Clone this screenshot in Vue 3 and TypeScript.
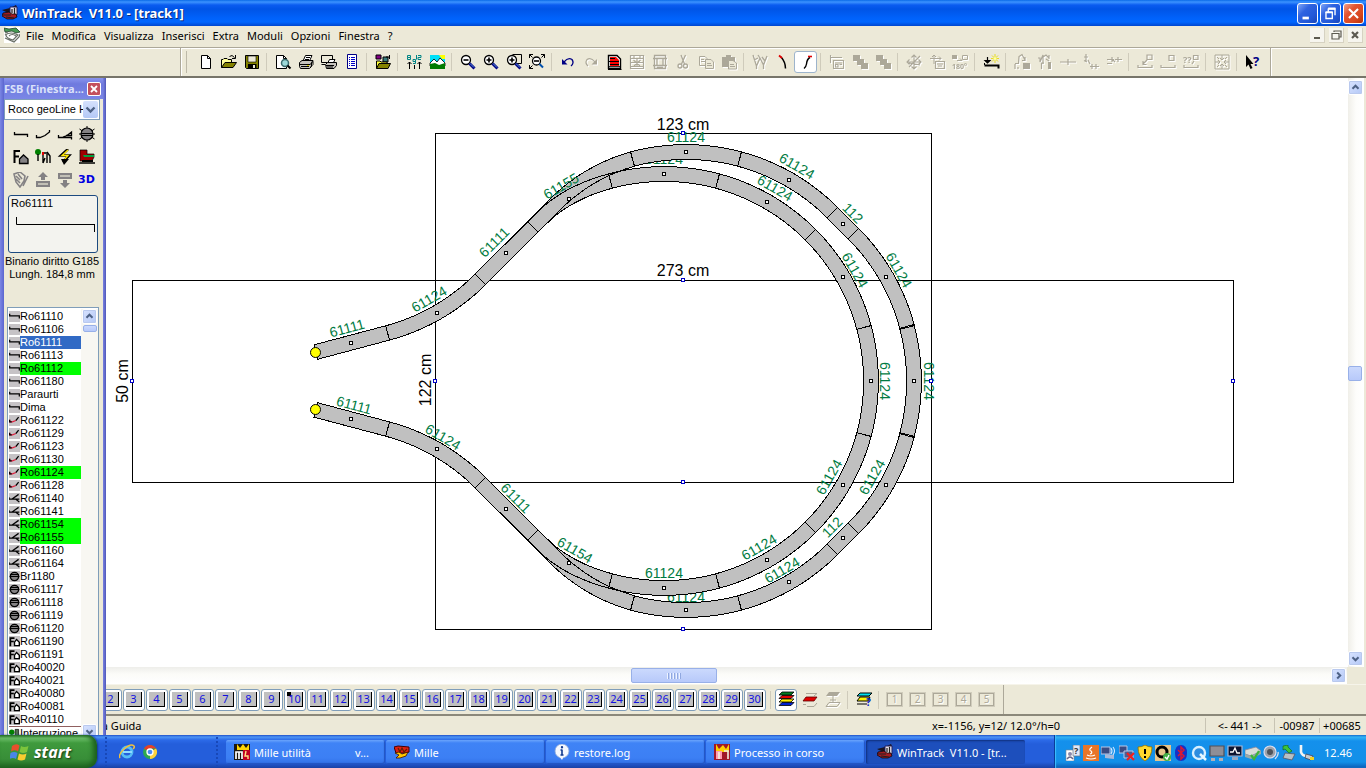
<script setup lang="ts">
import { h, ref } from 'vue'

type Shape = [d: string, fill?: string, stroke?: string, width?: number]
type Mark = [text: string, x: number, y: number, size: number, color: string]
interface Glyph { s: Shape[]; t?: Mark[] }

const K = '#000'
const G = '#aca899'
const N = 'none'
const circle = (x: number, y: number, r: number) =>
  `M${x - r} ${y}a${r} ${r} 0 1 0 ${2 * r} 0a${r} ${r} 0 1 0 ${-2 * r} 0Z`
const lens: Shape[] = [
  [circle(6, 6, 4.5), '#fff', K, 1.3],
  ['M9.5 9.5L14.5 14.5', N, '#000084', 3],
  ['M10 9.5L14 13.5', N, '#5a9ade', 1],
]

const glyphs: Record<string, Glyph> = {
  new: { s: [['M3.5 1.5H9.5L12.5 4.5V14.5H3.5Z', '#fff', K], ['M9.5 1.5V4.5H12.5', N, K]] },
  open: { s: [['M.5 13.5V5.5H2L3 4.5H6L7 5.5H10.5V8.5', '#ffff9c', K], ['M.5 13.5L4 8.5H15.5L12 13.5Z', '#848200', K], ['M8.5 2.5Q11 0 13.5 3.5M14.5 1V4.5H11', N, K]] },
  save: { s: [['M1.5 1.5H14.5V14.5H2.5L1.5 13.5Z', '#848200', K], ['M4 2H12V8H4Z', '#ece9d8', K, 0.6], ['M4 10H12.5V14.5H4Z', K], ['M9 11H11V14H9Z', '#ece9d8']] },
  preview: { s: [['M1.5 1.5H8.5L11.5 4.5V14.5H1.5Z', '#fff', K], ['M8.5 1.5V4.5H11.5', N, K], [circle(10, 9, 3.5), '#9cd8d8', '#39696b', 1.5], ['M12.5 11.5L15.5 14.5', N, K, 2]] },
  print: { s: [['M5 7L7.5 1.5H14L11.5 7Z', '#fff', K], ['M8 3.5H12M7 5.5H11', N, K], ['M1.5 8.5L4 6.5H15L13.5 8.5V12.5L11.5 14.5H2.5L1.5 12.5Z', '#c6c3bd', K], ['M1.5 10.5H12.5M12.5 10L15 7.5V10.5L12.5 13M3 12.5H11', N, K], ['M9 11.5H11', N, '#ded000']] },
  setup: { s: [['M.5 1.5H11.5V8.5H.5Z', '#ece9d8', K], ['M.5 10.5H4', N, K], ['M7 8.5L8.5 5.5H14L12.5 8.5', '#fff', K], ['M4.5 10.5L6.5 8.5H15.5V11.5L13 14.5H5.5Z', '#c6c3bd', K], ['M5 11.5H13M6 13H12', N, K]] },
  list: { s: [['M3.5 .5H12.5V14.5H3.5Z', '#fff', '#000084'], ['M5 3.5H6M5 5.5H6M5 7.5H6M5 9.5H6M5 11.5H6M7 3.5H11M7 5.5H11M7 7.5H11M7 9.5H11M7 11.5H11', N, '#0000c6']] },
  library: { s: [['M1 1H6V5H1Z', '#840084', K], ['M8 3H13V8H8Z', '#397b7b', K], ['M11 3H15M14.5 1V5', N, K], ['M1.5 14.5V7H5L6 8H12V10', '#ffff39', K], ['M1.5 14.5L4 9.5H15.5L13 14.5Z', '#848200', K]] },
  heights: { s: [['M3.5 15V8M1.5 10L3.5 8L5.5 10M13.5 15V8M11.5 10L13.5 8L15.5 10M8.5 11V15', N, K], ['M1.5 1.5H4.5V3.5H1.5ZM1.5 3.5V5.5H4.5V3.5M7 5.5H9.5V7.5H7ZM9.5 7V9.5H7M10.5 1V5.5M12 1.5H15V3.5H12V5.5H15', N, '#008484']] },
  picture: { s: [['M1 1H16V15H1Z', '#00e0f8'], ['M10 1H16V5H13Z', '#ffff00'], ['M1 9L5 5L8 8L11 4L16 9V12H1Z', '#fff', K, 0.8], ['M1 10L6 9L10 11L16 9V15H1Z', '#007b00']] },
  zoomOut: { s: [...lens, ['M3.5 6H8.5', N, K, 1.6]] },
  zoomIn: { s: [...lens, ['M3.5 6H8.5M6 3.5V8.5', N, K, 1.6]] },
  zoomArea: { s: [['M6.5 .5H15.5V9.5H9', '#ece9d8', K], ...lens, ['M3.5 6H8.5M6 3.5V8.5', N, K, 1.6]] },
  zoomFit: { s: [[circle(7.5, 7, 4), '#fff', K, 1.3], ['M10.5 10L14 13.5', N, '#0050ad', 2], ['M5 7H10', N, K, 1.6], ['M.5 4V.5H4M.5 .5L3.5 3.5M12 .5H15.5V4M15.5 .5L12.5 3.5M.5 11V14.5H4M.5 14.5L3.5 11.5', N, K]] },
  undo: { s: [['M4 8Q8 3 12 5.5Q14.5 9 11 12', N, '#000084', 1.3], ['M2 5V10.5H7.5Z', '#000084']] },
  redo: { s: [['M12 8Q8 3 4 5.5Q1.5 9 5 12', N, G, 1.2], ['M14 5V10.5H8.5Z', G]] },
  parts: { s: [['M2.5 1.5H11L14.5 5V14.5H2.5Z', '#fff', K, 1.4], ['M4 3H10L13 6V12H4Z', '#f00'], ['M4 4.5H9M3 7.5H13M4 10.5H13', N, K, 1.2], ['M3 12.7H14', N, K, 1], ['M2 15.5H15.500', N, K]] },
  split: { s: [['M1.5 1.5H14.5V14.5H1.5ZM1.5 4.5H14.5M1.5 8.5H14.5M1.5 12.5H14.5M5 1V5M11 1V5M8 5V12M4.5 6L11 12M11.5 6L5 12', N, G, 1.2]] },
  film: { s: [['M2.5 1.5H13.5V14.5H2.5ZM1 4.5H15M1 11.5H15M5 4V12M11 4V12M5 13.5H11', N, G, 1.3]] },
  cut: { s: [['M6 1L9.5 10M10.5 1L6.5 10', N, G, 1.3], [circle(5, 12, 2), N, G, 1.3], [circle(10.5, 12, 2), N, G, 1.3]] },
  copy: { s: [['M1.5 2.5H7L9.5 5V11.5H1.5Z', N, G], ['M7.5 5.5H13L15.5 8V14.5H7.5Z', '#ece9d8', G], ['M3 5.5H6M3 7.5H7M9 9.5H13M9 11.5H14', N, G]] },
  paste: { s: [['M1 3H14V13H1Z', G], ['M5 1H10V4H5Z', G], ['M7.5 6.5H12L15.5 9V15H7.5Z', '#ece9d8', G], ['M9 10.5H13M9 12.5H14', N, G]] },
  fan: { s: [['M4.5 15V12L1 1M4.5 12L8 4M11.5 15V11L8 4L6 1M11.5 11L15 2M2 6L6 4M13 7L10 3', N, G, 1.3]] },
  curveL: { s: [['M6 3Q10.5 8 10.5 14.5', N, K, 1.5], ['M4 1.500L7 4', N, '#e00000', 1.8]] },
  curveR: { s: [['M12 3.5Q9 5 8.500 10Q8 13 6 14.5', N, K, 1.4], ['M10 2.5H14', N, '#e00000', 1.6]] },
  props: { s: [['M1 3.5H13M1.5 1V9M4.5 6.5H14.5V14.5H4.5ZM6 9H13M6.5 10.5H9V13H6.5ZM10.5 10.5H13', N, G, 1.1]] },
  stack: { s: [['M1 1H8V7H1ZM5 5H12V11H5ZM9 9H16V15H9Z', G]] },
  move: { s: [['M8 1V15M1 8H15M3 13L14 2M5.5 3.5L8 1L10.5 3.5M5.5 12.5L8 15L10.5 12.5M3.5 5.5L1 8L3.5 10.5M12.5 5.5L15 8L12.5 10.5M3 9L14 11', N, G, 1.1]] },
  moveBox: { s: [['M5 1V10M1 4.5H12M3 3L5 1L7 3M10 2.5L12 4.5L10 6.5', N, G], ['M6.5 7.5H15.5V14.5H6.5ZM8 10H14M9 12H13', N, G, 1.2]] },
  rot: { s: [['M0 1H5V5H0Z', G], ['M10.5 1.5H15.5V5.5H10.5ZM5 6.5H10M8 4.5L10 6.5', N, G]], t: [['180°', 0, 15, 7, G]] },
  snap: { s: [['M1.5 11.5H15.5V14.5', N, K, 2], ['M1.500 11V9', N, K], ['M4.5 3V9M2 6.500H7L4.5 9Z', K, K, 1.2], ['M12 0V9M8 4.5H16M9 1.5L15 7.5M15 1.5L9 7.5', N, '#e8dc20', 1], [circle(12, 4.5, 1.5), '#ffffa0']] },
  h1: { s: [['M1 15V10M1 9.5H4.5L5 2.5L8 .5L11 6M11 3V6.5H8M4 13V15', N, G, 1.2], ['M9 9H16V15H9Z', G]] },
  h2: { s: [['M1 4H3V8L6 1V10M6 3L9 1L12 4M12 1V5M4.5 15V9H7M9 5L12 7', N, G, 1.2], ['M11 8H14V15H11Z', G]] },
  h3: { s: [['M0 8H16M8 5V11', N, G, 1.2]] },
  h4: { s: [['M3 0V7M1 3H5M5 6L7 10M1 6.5L4 8M7 12.5H16M9 10V15M13 10V15', N, G, 1.2]] },
  h5: { s: [['M1 5.5H8M6 3V8M1 9.5H6M9 5.5H16M6 5L9 8M12 3V8', N, G, 1.2]] },
  g1: { s: [['M1 11V13.5H15V11', N, G, 1.2], ['M10 1H15V5.5H10ZM10 6L6 10M6 7V10.5H9.5', N, G, 1.2]] },
  g2: { s: [['M1 11V13.5H15V11M9 1.5H14V6.5H9Z', N, G, 1.2]] },
  g3: { s: [['M1 11V13.5H15V11M10.5 1.5H15V5.5H10.5ZM9 10L11 7', N, G, 1.2]], t: [['??', 0, 9, 9, G]] },
  center: { s: [['M1 1H15V15H1Z', N, G, 1], ['M8 1V6M6 4L8 6L10 4M8 15V10M6 12L8 10L10 12M1 8H6M4 6L6 8L4 10M15 8H10M12 6L10 8L12 10M3 3L5 5M13 3L11 5M3 13L5 11M13 13L11 11', N, G, 1]] },
  help: { s: [['M1 1V13L3.500 10.500L5.500 15L7.500 14L5.500 10H8.500Z', K]], t: [['?', 8, 12, 13, '#000084']] },
  layersAll: { s: [['M4 0H16L13 3H1Z', '#007b21', K, 0.8], ['M4 3.5H16L13 6.5H1Z', '#e00000', K, 0.8], ['M4 7H16L13 10H1Z', '#ffef00', K, 0.8], ['M4 10.5H16L13 13.5H1Z', '#0020d0', K, 0.8]] },
  layerOne: { s: [['M4 1.5H15L12 4M1 12.5H4M5 14.5H12L15 11', N, G], ['M4 5H15L12 9H1Z', '#e00000', '#600000', 0.8]] },
  layerMove: { s: [['M4 0H15L12 4H1Z', G], ['M8 4V11M5 8H11M4 10.5H15L12 14.5H1Z', N, G]] },
  layerHelp: { s: [['M4 1H16L13 4H1Z', '#00e0f0', K], ['M4 5H14L12 9H1Z', '#fff700', K], ['M1 12H11', N, K]], t: [['?', 10, 14, 10, '#0020c0']] },
  pStraight: { s: [['M1.5 6V8.5H14.5V11', N, K, 1.3]] },
  pCurve: { s: [['M1.500 9V11.5H5L10 9.500L14.500 6V4', N, K, 1.3]] },
  pSwitch: { s: [['M1.500 9V11.5H14.500V13.500M6 11L10 9.500L14.500 6V9.500H9', N, K, 1.3]] },
  pTable: { s: [['M.5 3L15.5 13M.5 13L15.5 3M8 0V16M0 8H16', N, K, 1], [circle(8, 8, 6), '#848284', K, 1.2], ['M2 7.5H14M2 9.5H14', N, K, 1]] },
  pHouse: { s: [['M1.5 14V2H7M1.5 7.5H6', N, K, 2], ['M6.5 14.5V10L10.5 6L15 10V14.5Z', '#848284', K, 1.3]] },
  pScene: { s: [[circle(3, 3, 3), '#008000'], ['M3 5V12M8 14V4H12M10 9L8 14M12 5V14M12 3L15 7V14', N, K, 1.4], ['M7 3H9V6H7Z', '#e00000']] },
  pSignal: { s: [['M11 0L4 6.5H12L6 13', N, K, 2.6], ['M11 1L5 6.5H11L7 11', N, '#ffe700', 1.3], ['M4 10H12L7 16Z', K]] },
  pTrain: { s: [['M1 1H8V5H15V8L13 12H1Z', '#a00000', K, 0.7], ['M4 6H15V8H5Z', '#00a040'], ['M0 14H16', N, K, 1.5], ['M3 11H14V13H3Z', K]] },
  pHand: { s: [['M1 2L7 0L12 4L11 9L7 15L3 10ZM3 4L7 8M5 2L9 7M3 7L7 11M10 14L15 4', N, '#848284', 1.6]] },
  pUp: { s: [['M8 0L13 5H10V8H6V5H3Z', '#848284'], ['M1 9H15V15H1Z', '#848284'], ['M3 12H13', N, '#ece9d8', 1.2]] },
  pDown: { s: [['M8 16L13 11H10V8H6V11H3Z', '#848284'], ['M1 1H15V7H1Z', '#848284'], ['M3 4H13', N, '#ece9d8', 1.2]] },
  lStraight: { s: [['M0 0H16V16H0Z', '#c6c3c6'], ['M1 4V7H15V11', N, K, 1.8]] },
  lCurve: { s: [['M0 0H16V16H0Z', '#c6c3c6'], ['M1 7V10H5L10 8', N, '#e02040', 1.8], ['M10 8L14 3M1 7V10H4', N, K, 1.8]] },
  lSwitch: { s: [['M0 0H16V16H0Z', '#c6c3c6'], ['M0 6V9H15M4 9L14 2M10 9L15 13', N, K, 1.8]] },
  lTable: { s: [['M0 0H16V16H0Z', '#c6c3c6'], [circle(8, 8, 6), '#848284', K, 2], ['M1 8H15M2 5H14', N, K, 1.6]] },
  lHouse: { s: [['M0 0H16V16H0Z', '#c6c3c6'], ['M2 15V3H8M2 8H7', N, K, 2.5], ['M8 14V9L11 5L15 9V14Z', '#fff', K, 2]] },
  lSignal: { s: [[circle(4, 6, 4), '#008000'], ['M9 2H14V12H9Z', '#507050', K, 1]] },
  app: { s: [['M0 5L8 3L14 0L15 2L6 8Z', '#1b1420'], ['M8 2H15V10H8Z', '#e8e0e8', '#202060', 1], ['M1 8L7 7L10 9L14 9L15 12L11 14L5 14L0 11Z', '#a31c22', K, 0.7], ['M10 4V8M12.5 3V9M1 10H9M4 12L12 13', N, '#202020', 1.2]] },
  doc: { s: [['M0 0H16V16H0Z', '#fff'], ['M0 1L5 2L12 1L16 5L12 6L8 4L1 5Z', '#479a54', '#204028', 0.8], ['M1 8Q7 4 14 8L9 13Q2 11 2 8M5 9Q8 6 12 9M1 6L4 5M1 11L10 15L15 10L16 7', N, '#6a7068', 1.2]] },
  arcade: { s: [['M0 0H16V16H0Z', '#1c1810'], ['M3 0L6 4L9 0L12 4L15 0V6H3Z', '#ffd700'], ['M9 6H16V16H9Z', '#c00020'], ['M2 15V8H8V15M5 8V15', N, '#fff', 1.7], ['M12 7L11 12H14V15', N, '#ffe080', 1.4]] },
  arcade2: { s: [['M0 0H16V16H0Z', '#a01828'], ['M2 0L5 5L9 1L12 5L15 0V8H2Z', '#ffd000'], ['M2 7H8V15H2Z', '#ff9cb0'], ['M5 8V15M10 7H14V15', N, '#f0f0e0', 1.6]] },
  mille: { s: [['M0 3L4 2L15 3V8L12 9H2Z', '#e02010', '#400', 1], ['M1 9L5 8L8 10L14 8L12 12L6 14H2L5 11Z', '#ffc800', '#401000', 0.8], ['M4 4L6 8L8 4L10 8L13 5', N, '#602000', 1.2]] },
  info: { s: [[circle(8, 7, 7), '#f4f8ff', '#8ca8d8', 0.8], ['M5 12L8 16L10 12Z', '#f4f8ff'], ['M8 6V11M6.5 6H8.5M6.5 11H9.5', N, '#103a90', 1.6], [circle(8, 3.3, 1.2), '#103a90']] },
  ie: { s: [[circle(8, 8, 5), N, '#55bdf5', 2.8], ['M4 8H13', N, '#8fdcff', 2], ['M1 14Q-1 11 5 5Q12 -1 15 2Q16 3 14 5', N, '#f0c040', 1.5]] },
  chrome: { s: [[circle(8, 8, 7), '#2da94f'], ['M8 8L1.9 4.4A7 7 0 0 1 14.1 4.5H8Z', '#e43e2b'], ['M8 8L14.1 4.5A7 7 0 0 1 8 15Z', '#ffd23f'], [circle(8, 8, 3), '#4c8df5', '#fff', 1.3]] },
  t1: { s: [['M1 5H9V16H1Z', '#fff', '#789', 0.6], ['M8 0H15V11H8Z', '#dfe8f8', '#678', 0.7], [circle(5, 9, 2), '#88a'], ['M2 14Q5 10 8 14', N, '#668', 1.4]], t: [['?', 9, 9, 9, '#333']] },
  t2: { s: [['M0 0H16V16H0Z', '#e87528'], ['M9 2Q5 5 8 6Q10 8 7 9M4 10Q8 12 12 10M3 13Q8 15 13 13', N, '#fff', 1.2]] },
  t3: { s: [['M0 2H9V9H0Z', '#394b83', '#b8c8e8', 1], ['M4 9L13 10V14L4 13Z', '#a8b8d8'], ['M10 3Q12 6 10 9M12 2Q15 6 12 10', N, '#d8e8ff', 1.1]] },
  t4: { s: [['M0 1H8V8H0Z', '#394b83', '#b8c8e8', 1], ['M5 6H14V13H5Z', '#4b5e95', '#b8c8e8', 1], ['M8 8L15 15M15 8L8 15', N, '#f02020', 2.2]] },
  t5: { s: [['M8 0Q11 2 15 2Q15 12 8 16Q1 12 1 2Q5 2 8 0Z', '#ffd92e', '#907000', 0.8], ['M8 4V9M8 11V13', N, K, 2]] },
  t6: { s: [['M0 0H16V16H0Z', '#e7c58b'], [circle(7, 7, 5), N, K, 3], [circle(12, 12, 4), '#43ad45'], ['M10 12L12 14L14 10', N, '#fff', 1.4]] },
  t7: { s: [['M8 0Q14 0 14 8T8 16T2 8T8 0Z', '#1432c8'], ['M5 5L11 11L8 14V2L11 5L5 11', N, '#e01830', 1.5]] },
  t8: { s: [[circle(8, 8, 6), '#2c8de0', '#d8f0ff', 2.4], ['M9 9L15 15', N, '#e8f8ff', 2.5]] },
  t9: { s: [['M1 1H15V11H1Z', '#8e8e96', '#50505a', 1.2], ['M2 13H6V16H2ZM10 13H14V16H10Z', '#b0b0b8']] },
  t10: { s: [['M1 1H15V11H1Z', '#0c1430', '#a8b8d8', 1.2], ['M3 7H6L8 3L10 8H13', N, '#fff', 1.3], ['M5 12H11V15H5Z', '#98a8c0']] },
  t11: { s: [['M0 5L11 2L16 6L6 11L0 9Z', '#d8dcd8', '#889', 0.8], ['M0 9L6 11L16 6V9L6 14L0 12Z', '#9aa'], ['M6 10L9 14L14 6', N, '#3cb43c', 2.3]] },
  t12: { s: [[circle(7, 7, 6), '#9fa3aa', '#dde', 1.2], [circle(7, 7, 3), '#50545c'], ['M12 14Q16 10 15 7', N, '#d0dcf0', 1.4]] },
  t13: { s: [['M4 8L14 9L11 15L2 13Z', '#b8c0c4', '#556', 0.8], ['M2 1L7 0V2L11 6L8 8L4 4L2 5Z', '#3cc43c', '#106010', 0.6]] },
  t14: { s: [['M2 0V7Q3 11 8 11', N, '#f4f4f4', 2.6], ['M7 9L14 11L12 15L6 13Z', '#c8ccd0', '#445', 0.8], ['M11 12H15V15H11Z', '#f0d020']] },
}

const Ico = (p: { n: string; size?: number }) => {
  const g = glyphs[p.n]
  const size = p.size ?? 16
  return h('svg', { width: size, height: size, viewBox: '0 0 16 16', 'aria-hidden': 'true' }, [
    ...g.s.map(([d, fill, stroke, w]) =>
      h('path', { d, fill: fill ?? N, stroke: stroke ?? N, 'stroke-width': w ?? 1 })),
    ...(g.t ?? []).map(([text, x, y, fs, color]) =>
      h('text', { x, y, fill: color, 'font-size': fs, 'font-weight': 700 }, text)),
  ])
}
Ico.props = ['n', 'size']

const title = 'WinTrack  V11.0 - [track1]'
const menus = ['File', 'Modifica', 'Visualizza', 'Inserisci', 'Extra', 'Moduli', 'Opzioni', 'Finestra', '?']

const toolGroups: string[][] = [
  ['new', 'open', 'save'], ['preview', 'print', 'setup', 'list'], ['library'], ['heights', 'picture'],
  ['zoomOut', 'zoomIn', 'zoomArea', 'zoomFit'],
  ['undo', 'redo', 'parts', 'split', 'film', 'cut', 'copy', 'paste'],
  ['fan', 'curveL', 'curveR'], ['props', 'stack', 'stack'], ['move', 'moveBox', 'rot'], ['snap'],
  ['h1', 'h2', 'h3', 'h4', 'h5'], ['g1', 'g2', 'g3'], ['center'], ['help'],
]
const disabled = new Set(['redo', 'split', 'film', 'cut', 'copy', 'paste', 'fan', 'props', 'stack', 'move', 'moveBox', 'rot',
  'h1', 'h2', 'h3', 'h4', 'h5', 'g1', 'g2', 'g3', 'center'])

const palette = ['pStraight', 'pCurve', 'pSwitch', 'pTable', 'pHouse', 'pScene', 'pSignal', 'pTrain', 'pHand', 'pUp', 'pDown']

const group = (icon: string, names: string[]) => names.map((name) => ({ icon, name }))
const parts = [
  ...group('lStraight', ['Ro61110', 'Ro61106', 'Ro61111', 'Ro61113', 'Ro61112', 'Ro61180', 'Paraurti', 'Dima']),
  ...group('lCurve', ['Ro61122', 'Ro61129', 'Ro61123', 'Ro61130', 'Ro61124', 'Ro61128']),
  ...group('lSwitch', ['Ro61140', 'Ro61141', 'Ro61154', 'Ro61155', 'Ro61160', 'Ro61164']),
  ...group('lTable', ['Br1180', 'Ro61117', 'Ro61118', 'Ro61119', 'Ro61120']),
  ...group('lHouse', ['Ro61190', 'Ro61191', 'Ro40020', 'Ro40021', 'Ro40080', 'Ro40081', 'Ro40110']),
]
const used = new Set(['Ro61112', 'Ro61124', 'Ro61154', 'Ro61155'])
const selected = ref('Ro61111')

const layers = Array.from({ length: 30 }, (_, i) => i + 1)

const tasks = [
  { icon: 'arcade', text: 'Mille utilità', tail: 'v...' },
  { icon: 'mille', text: 'Mille' },
  { icon: 'info', text: 'restore.log' },
  { icon: 'arcade2', text: 'Processo in corso' },
  { icon: 'app', text: 'WinTrack  V11.0 - [tr...', active: true },
]
const tray = Array.from({ length: 14 }, (_, i) => `t${i + 1}`)

/* Track plan geometry */
type P = [number, number]
const HALF = 7.4
const R = 207
const rad = (a: number) => (a * Math.PI) / 180
const on = (cx: number, cy: number, angle: number): P =>
  [cx + R * Math.cos(rad(angle)), cy + R * Math.sin(rad(angle))]

function arc(cx: number, cy: number, from: number, to: number): P[] {
  return Array.from({ length: 25 }, (_, i) => on(cx, cy, from + ((to - from) * i) / 24))
}
function bend(a: P, s: P, c: P, b: P): P[] {
  const pts: P[] = [a]
  for (let i = 0; i <= 20; i++) {
    const t = i / 20
    const u = 1 - t
    pts.push([u * u * s[0] + 2 * u * t * c[0] + t * t * b[0], u * u * s[1] + 2 * u * t * c[1] + t * t * b[1]])
  }
  return pts
}
function band(pts: P[]): string {
  const left: string[] = []
  const right: string[] = []
  pts.forEach((p, i) => {
    const a = pts[Math.max(0, i - 1)]
    const b = pts[Math.min(pts.length - 1, i + 1)]
    const len = Math.hypot(b[0] - a[0], b[1] - a[1])
    const nx = (-(b[1] - a[1]) / len) * HALF
    const ny = ((b[0] - a[0]) / len) * HALF
    left.push(`${(p[0] + nx).toFixed(1)} ${(p[1] + ny).toFixed(1)}`)
    right.unshift(`${(p[0] - nx).toFixed(1)} ${(p[1] - ny).toFixed(1)}`)
  })
  return `M${[...left, ...right].join('L')}Z`
}
const flip = (pts: P[]): P[] => pts.map(([x, y]) => [x, 762 - y])

const fork: P = [533, 226.8]
const upper: P[][] = [
  [[316, 352], on(334, 133, 75)],
  arc(334, 133, 75, 45),
  [on(334, 133, 45), fork],
  bend(fork, [550, 209.8], [584, 173], on(686, 359, -105)),
  bend(fork, [540, 219.8], [566, 193], on(664, 381, -105)),
  arc(686, 359, -105, -75),
  arc(686, 359, -75, -45),
  [on(686, 359, -45), on(707, 380, -45)],
  arc(707, 380, -45, -15),
  arc(664, 381, -105, -75),
  arc(664, 381, -75, -45),
  arc(664, 381, -45, -15),
]
const middle = [arc(707, 381, -15, 15), arc(664, 381, -15, 15)]
const bands = [...upper, ...upper.map(flip), ...middle].map(band)

const upperDots: P[] = [[351, 343], [437, 313], [506, 253], [569, 199], [686, 152], [789, 180], [843, 224], [886, 277], [664, 174], [767, 202], [843, 277]]
const dots: P[] = [...upperDots, ...flip(upperDots), [914, 381], [871, 381]]
const grips: P[] = [[683, 133], [683, 280], [435, 381], [132, 381], [1233, 381], [931, 381], [683, 482], [683, 629]]

type Tag = [text: string, x: number, y: number, angle: number]
const under: Tag[] = [['61124', 664, 159, 0], ['61124', 686, 597, 0]]
const tags: Tag[] = [
  ['61111', 347, 328, -15], ['61124', 429, 299, -30], ['61111', 494, 242, -45], ['61155', 561, 186, -30],
  ['61124', 686, 137, 0], ['61124', 797, 166, 30], ['112', 853, 213, 45], ['61124', 899, 270, 60],
  ['61124', 929, 381, 90], ['61124', 872, 477, -60], ['112', 832, 527, -45], ['61124', 782, 570, -30],
  ['61124', 775, 188, 30], ['61124', 855, 270, 60], ['61124', 885, 381, 90],
  ['61124', 829, 477, -60], ['61124', 759, 547, -30], ['61124', 664, 573, 0], ['61154', 575, 550, 30],
  ['61111', 516, 498, 45], ['61124', 443, 437, 30], ['61111', 354, 405, 15],
]
const dims: Tag[] = [['123 cm', 683, 125, 0], ['273 cm', 683, 271, 0], ['50 cm', 123, 381, -90], ['122 cm', 426, 380, -90]]
const place = (t: Tag) => `translate(${t[1]} ${t[2]}) rotate(${t[3]})`
</script>

<template>
  <div class="desktop">
    <header class="titlebar">
      <Ico n="app" />
      <h1>{{ title }}</h1>
      <div class="caption">
        <button aria-label="Riduci a icona"><svg viewBox="0 0 21 21"><path d="M5 14H12V17H5Z" fill="#fff" /></svg></button>
        <button aria-label="Ripristina"><svg viewBox="0 0 21 21"><path d="M8 5.5H15.5V12.5M8 5V9M5.5 9.5H12.5V16H5.5Z" fill="none" stroke="#fff" stroke-width="1.5" /><path d="M5 8H13V10H5ZM8 4H16V6H8Z" fill="#fff" /></svg></button>
        <button class="close" aria-label="Chiudi"><svg viewBox="0 0 21 21"><path d="M5.5 5.5L15.5 15.5M15.5 5.5L5.5 15.5" stroke="#fff" stroke-width="2.3" /></svg></button>
      </div>
    </header>

    <nav class="menubar">
      <Ico n="doc" />
      <button v-for="m in menus" :key="m" class="menu">{{ m }}</button>
      <div class="mdi">
        <button aria-label="Riduci documento"><svg viewBox="0 0 14 14"><path d="M4 9H10V11H4Z" fill="#5c5a50" /></svg></button>
        <button aria-label="Ripristina documento"><svg viewBox="0 0 14 14"><path d="M5 4V3H12V9H10M3 5.5H10V11H3ZM5 3H12" fill="none" stroke="#5c5a50" stroke-width="1.2" /></svg></button>
        <button aria-label="Chiudi documento"><svg viewBox="0 0 14 14"><path d="M4 4L10 10M10 4L4 10" stroke="#5c5a50" stroke-width="2.2" /></svg></button>
      </div>
    </nav>

    <div class="toolbar-row">
      <div class="toolbar main-tools" role="toolbar" aria-label="Standard">
        <div v-for="(g, gi) in toolGroups" :key="gi" class="group">
          <button v-for="(t, ti) in g" :key="ti" class="tool" :class="{ on: t === 'curveR', off: disabled.has(t) }" :disabled="disabled.has(t)" :aria-label="t">
            <Ico :n="t" />
          </button>
        </div>
      </div>
    </div>

    <main class="work">
      <div class="plan">
        <svg class="canvas" viewBox="0 78 1348 589" preserveAspectRatio="xMinYMin meet" role="img" aria-label="track1">
          <g class="frames">
            <rect x="132.5" y="280.5" width="1101" height="202" />
            <rect x="435.5" y="133.5" width="496" height="496" />
          </g>
          <text v-for="(t, i) in under" :key="`u${i}`" class="tag" :transform="place(t)" dy="5">{{ t[0] }}</text>
          <path v-for="(d, i) in bands" :key="`f${i}`" :d="d" class="bed" />
          <path v-for="(d, i) in bands" :key="`e${i}`" :d="d" class="edge" />
          <rect v-for="(p, i) in dots" :key="`d${i}`" class="dot" :x="p[0] - 1.5" :y="p[1] - 1.5" width="3" height="3" />
          <text v-for="(t, i) in tags" :key="`t${i}`" class="tag" :transform="place(t)" dy="5">{{ t[0] }}</text>
          <text v-for="(t, i) in dims" :key="`m${i}`" class="dim" :transform="place(t)" dy="5">{{ t[0] }}</text>
          <rect v-for="(p, i) in grips" :key="`g${i}`" class="grip" :x="p[0] - 1.5" :y="p[1] - 1.5" width="3" height="3" />
          <circle class="end" cx="315.5" cy="352.5" r="5" />
          <circle class="end" cx="315.5" cy="409.5" r="5" />
        </svg>
        <div class="vscroll">
          <button class="sb" aria-label="Su"><svg viewBox="0 0 15 15"><path d="M4 9L7.5 5.5L11 9" /></svg></button>
          <span class="thumb"></span>
          <button class="sb" aria-label="Giù"><svg viewBox="0 0 15 15"><path d="M4 6L7.5 9.5L11 6" /></svg></button>
        </div>
      </div>
      <div class="hscroll">
        <span class="thumb"><i v-for="n in 5" :key="n"></i></span>
        <button class="sb" aria-label="Destra"><svg viewBox="0 0 15 15"><path d="M6 4L9.5 7.5L6 11" /></svg></button>
      </div>
    </main>

    <div class="layer-row">
      <div class="toolbar layer-tools" role="toolbar" aria-label="Livelli">
        <div class="group">
          <button v-for="n in layers" :key="n" class="tool layer on" :class="{ current: n === 10 }"><span>{{ n }}</span></button>
        </div>
        <div class="group">
          <button class="tool on" aria-label="Tutti i livelli"><Ico n="layersAll" /></button>
          <button class="tool" aria-label="Livello attivo"><Ico n="layerOne" /></button>
          <button class="tool off" disabled aria-label="Sposta livello"><Ico n="layerMove" /></button>
        </div>
        <div class="group"><button class="tool" aria-label="Nomi livelli"><Ico n="layerHelp" /></button></div>
        <div class="group">
          <button v-for="n in 5" :key="n" class="tool off num" disabled><span>{{ n }}</span></button>
        </div>
      </div>
    </div>

    <footer class="status">
      <span class="hint">la Guida</span>
      <span class="coords">x=-1156, y=12/ 12.0°/h=0</span>
      <span class="cell c1">&lt;- 441 -&gt;</span>
      <span class="cell c2">-00987</span>
      <span class="cell c3">+00685</span>
    </footer>

    <div class="taskbar">
      <button class="start">
        <svg viewBox="0 0 20 20" width="20" height="20" aria-hidden="true">
          <path d="M2 4Q6 1 9.5 3.5L8 9.5Q5 7 1 9.5Z" fill="#e8502c" />
          <path d="M11 4Q14 6 18.5 4L17 10Q13 12 9.5 10Z" fill="#7cc43c" />
          <path d="M.5 11Q4 9 7.5 11L6 17Q3 15 -.5 17Z" fill="#4a86e8" />
          <path d="M9 11.5Q13 13.5 16.5 11.5L15 17.5Q11 19.5 7.5 17.5Z" fill="#f8cc30" />
        </svg>
        <span>start</span>
      </button>
      <div class="quick">
        <a href="#" aria-label="Internet Explorer"><Ico n="ie" /></a>
        <a href="#" aria-label="Chrome"><Ico n="chrome" /></a>
      </div>
      <div class="tasks">
        <button v-for="t in tasks" :key="t.text" class="task" :class="{ active: t.active }">
          <Ico :n="t.icon" />
          <span>{{ t.text }}</span>
          <span v-if="t.tail" class="tail">{{ t.tail }}</span>
        </button>
      </div>
      <div class="tray">
        <Ico v-for="t in tray" :key="t" :n="t" />
        <time>12.46</time>
      </div>
    </div>

    <aside class="fsb">
      <div class="fsb-title">
        <h2>FSB (Finestra...</h2>
        <button aria-label="Chiudi finestra"><svg viewBox="0 0 12 12"><path d="M3 3L9 9M9 3L3 9" stroke="#fff" stroke-width="1.8" /></svg></button>
      </div>
      <div class="fsb-body">
        <div class="combo">
          <select aria-label="Sistema di binari"><option>Roco geoLine H0</option></select>
          <svg viewBox="0 0 15 17" aria-hidden="true"><path d="M3.5 6.5L7.5 10.5L11.5 6.5" fill="none" stroke="#4d6185" stroke-width="2.3" /></svg>
        </div>
        <div class="palette">
          <button v-for="p in palette" :key="p" :aria-label="p"><Ico :n="p" /></button>
          <button class="three">3D</button>
        </div>
        <button class="sample">
          <span>{{ selected }}</span>
          <svg viewBox="0 0 84 18" aria-hidden="true"><path d="M5.5 1V8.5H84M83.5 8V16" fill="none" stroke="#000" /></svg>
        </button>
        <p class="desc">Binario diritto G185<br />Lungh. 184,8 mm</p>
        <div class="listbox">
          <ul role="listbox" aria-label="Binari">
            <li v-for="p in parts" :key="p.name" role="option" :aria-selected="p.name === selected" :class="{ used: used.has(p.name), sel: p.name === selected }" @click="selected = p.name">
              <Ico :n="p.icon" :size="11" /><span>{{ p.name }}</span>
            </li>
            <li class="last" role="option" aria-selected="false"><Ico n="lSignal" :size="11" /><span>Interruzione</span></li>
          </ul>
          <div class="list-scroll">
            <button class="sb" aria-label="Scorri su"><svg viewBox="0 0 15 15"><path d="M4 9L7.5 5.5L11 9" /></svg></button>
            <span class="thumb"></span>
            <button class="sb down" aria-label="Scorri giù"><svg viewBox="0 0 15 15"><path d="M4 6L7.5 9.5L11 6" /></svg></button>
          </div>
        </div>
      </div>
    </aside>
  </div>
</template>

<style>
html, body { margin: 0; overflow: hidden; }
</style>

<style scoped>
.desktop {
  position: relative;
  display: flex;
  flex-direction: column;
  height: 100vh;
  overflow: hidden;
  background: #ece9d8;
  font: 11px/13px "Noto Sans", "Liberation Sans", sans-serif;
  color: #000;
}
* { box-sizing: border-box; }
button { font: inherit; color: inherit; padding: 0; margin: 0; border: 0; background: none; }
svg { display: block; flex: none; }
h1, h2, p, ul { margin: 0; padding: 0; }

.titlebar {
  flex: none;
  display: flex;
  align-items: center;
  gap: 4px;
  height: 26px;
  padding: 0 2px;
  background: linear-gradient(#0a6ae8 0, #3c93ff 2px, #0a5cf0 5px, #0054e6 9px, #0062fb 18px, #0066ff 22px, #0046cf 26px);
}
.titlebar h1 {
  flex: 1;
  font: bold 13px/18px "Noto Sans", sans-serif;
  color: #fff;
  white-space: pre;
  text-shadow: 1px 1px 0 #0a2a7a;
}
.caption { display: flex; gap: 2px; }
.caption button {
  width: 21px;
  height: 21px;
  border: 1px solid #fff;
  border-radius: 3px;
  background: linear-gradient(135deg, #7fa6f8, #2f63e0 35%, #2258d8 70%, #1a46b8);
}
.caption svg { width: 19px; height: 19px; }
.caption .close { background: linear-gradient(135deg, #f0a088, #e25430 35%, #d84820 70%, #b83208); }

.menubar { flex: none; display: flex; align-items: center; height: 20px; padding: 0 3px 2px 4px; margin-bottom: 1px; }
.menu { height: 18px; padding: 0 4px; }
.menubar > svg { margin-right: 2px; }
.mdi { display: flex; gap: 4px; margin-left: auto; }
.mdi button { width: 15px; height: 15px; background: #f6f5ef; border-right: 1px solid #d6d2c2; border-bottom: 1px solid #d6d2c2; }
.mdi svg { width: 14px; height: 14px; }

.toolbar-row { flex: none; height: 31px; border-top: 1px solid #aca899; border-bottom: 2px solid #77756a; box-shadow: inset 0 1px 0 #fff; }
.toolbar { display: flex; align-items: center; width: max-content; height: 100%; }
.main-tools { margin-left: 180px; padding: 0 6px 0 13px; border-left: 1px solid #aca899; border-right: 1px solid #aca899; box-shadow: inset 1px 0 0 #fff, 1px 0 0 #fff; background: linear-gradient(#bdb9a8, #bdb9a8) 5px 3px / 1px 22px no-repeat; }
.group { display: flex; }
.group + .group { padding-left: 8px; background: linear-gradient(#cfcbbb, #cfcbbb) 3px 2px / 1px 18px no-repeat; }
.tool { display: grid; place-items: center; width: 23px; height: 22px; border: 1px solid transparent; border-radius: 3px; }
.tool svg { overflow: visible; }
.tool.off svg { filter: drop-shadow(1px 1px 0 #fff); }
.tool.on { background: #fff; border-color: #9db4cc; }

.work { flex: 1; min-height: 0; display: flex; flex-direction: column; background: #fff; }
.plan { flex: 1; min-height: 0; display: flex; }
.canvas { flex: 1; min-width: 0; height: 100%; font-family: "Liberation Sans", Arial, sans-serif; }
.frames rect { fill: none; stroke: #000; shape-rendering: crispEdges; }
.bed { fill: #c0c0c0; }
.edge { fill: none; stroke: #000; shape-rendering: crispEdges; }
.dot { fill: #fff; stroke: #000; }
.grip { fill: #fff; stroke: #0000c8; }
.end { fill: #ff0; stroke: #000; }
.tag { font-size: 14px; fill: #007b42; text-anchor: middle; }
.dim { font-size: 16px; text-anchor: middle; }

.vscroll { flex: none; display: flex; flex-direction: column; align-items: center; justify-content: space-between; width: 18px; padding: 2px 2px 1px 0; background: linear-gradient(90deg, #f0efe9, #fdfdfb 50%, #fff); border-right: 2px solid #ece9d8; }
.sb { flex: none; width: 15px; height: 15px; border: 1px solid #fff; border-radius: 2px; background: linear-gradient(135deg, #d8e3ff, #b4c8f6); box-shadow: 0 0 0 1px #b9c9ee inset; }
.sb path { fill: none; stroke: #4d6185; stroke-width: 2.3; }
.sb svg { width: 13px; height: 13px; }
.thumb { border: 1px solid #98b0e8; border-radius: 2px; background: linear-gradient(#cbd9fd, #b7c9fa); }
.vscroll .thumb { width: 14px; height: 15px; }
.hscroll { flex: none; display: flex; align-items: center; justify-content: space-between; height: 17px; padding-right: 20px; background: linear-gradient(90deg, transparent calc(100% - 19px), #ece9d8 0), linear-gradient(#eeeeea, #fbfbf8 40%, #fff); }
.hscroll .thumb { display: flex; align-items: center; justify-content: center; gap: 1px; width: 86px; height: 15px; margin-left: 46.9%; }
.hscroll i { width: 1px; height: 6px; background: #eef3ff; box-shadow: 1px 0 0 #90a8e0; margin-right: 1px; }

.layer-row { flex: none; height: 32px; border-top: 1px solid #f6f4ea; border-bottom: 2px solid #8b887a; }
.layer-tools { margin-left: 77px; padding-right: 5px; border-right: 1px solid #aca899; }
.layer-tools .tool.on { width: 22px; margin-right: 1px; border-color: #7f9db9; }
.layer span { display: block; width: 16px; height: 15px; background: #c0c0c0; border-right: 1px solid #000; border-bottom: 1px solid #000; color: #1010e0; line-height: 14px; text-align: center; }
.layer.current span { background: linear-gradient(#000, #000) 0 0 / 4px 4px no-repeat #c0c0c0; }
.num span { width: 15px; height: 13px; border: 1px solid #aca899; outline: 1px solid #d0ccbc; color: #aca899; line-height: 11px; text-shadow: 1px 1px 0 #fff; font-size: 10px; }

.status { flex: none; display: flex; align-items: center; height: 19px; padding: 0 2px 0 99px; }
.coords { margin-left: auto; width: 273px; }
.cell { height: 15px; line-height: 15px; border-left: 1px solid #c8c4b4; text-align: center; }
.c1 { width: 69px; }
.c2 { width: 45px; }
.c3 { width: 45px; }

.taskbar { flex: none; position: relative; z-index: 2; display: flex; height: 33px; color: #fff; background: linear-gradient(#1f50c8 0, #4d95f5 2px, #2c6ae8 5px, #245edb 9px, #245edb 27px, #1941a5 33px); }
.start { display: flex; align-items: center; gap: 4px; width: 97px; padding-left: 10px; border-radius: 0 10px 10px 0; background: linear-gradient(#2d7a2d 0, #6fc16c 3px, #3f9a3d 8px, #388e38 24px, #1e6520 33px); box-shadow: inset -4px 0 5px #1c601c, 1px 0 2px #143a90; font: italic bold 16px/22px "Open Sans", sans-serif; text-shadow: 1px 1px 2px #143814; }
.quick { display: flex; align-items: center; gap: 7px; width: 129px; padding: 4px 0 4px 22px; background: radial-gradient(circle, #1848b8 1px, transparent 1px) 7px 5px / 4px 4px repeat-y, radial-gradient(circle, #1848b8 1px, transparent 1px) 118px 5px / 4px 4px repeat-y; }
.tasks { flex: 1; display: grid; grid-template-columns: repeat(5, minmax(0, 159px)); gap: 1px; padding: 5px 0 4px; }
.task { display: flex; align-items: center; gap: 4px; padding: 0 16px 0 8px; border-radius: 2px; background: linear-gradient(#6aa4fc 0, #3f83f6 3px, #3c7ff4 18px, #3070e6); white-space: pre; box-shadow: inset -1px -1px 1px #2254c0; text-align: left; }
.task .tail { margin-left: auto; }
.task.active { background: #1d4fbc; box-shadow: inset 1px 1px 2px #10307c; padding: 0 4px 0 11px; }
.tray { flex: none; display: flex; align-items: center; gap: 2px; padding: 2px 14px 0 10px; border-left: 1px solid #0a3c98; background: linear-gradient(#0e62c8 0, #32b4f4 2px, #1490ec 6px, #1290e8 27px, #0c5cb4 33px); box-shadow: inset 1px 0 1px #40c0ff; }
.tray time { margin-left: 7px; }

.fsb { position: absolute; left: 0; top: 78px; bottom: 33px; display: flex; flex-direction: column; width: 106px; padding: 0 3px 0 4px; overflow: hidden; background: linear-gradient(90deg, #7b86e4, #5b66cf 4px, transparent 5px), linear-gradient(270deg, #5058b8, #7982e2 3px, #7982e2); }
.fsb-title { flex: none; display: flex; align-items: center; justify-content: space-between; height: 21px; padding-right: 2px; background: linear-gradient(#8a94ee, #6f7ade 6px, #7a86e6); }
.fsb-title h2 { font: bold 11px/14px "Noto Sans", sans-serif; color: #dbe2fa; white-space: nowrap; }
.fsb-title button { flex: none; width: 14px; height: 14px; border: 1px solid #fff; border-radius: 2px; background: #c4505c; }
.fsb-body { flex: 1; min-height: 0; display: flex; flex-direction: column; padding-right: 3px; background: #ece9d8; font-family: "Liberation Sans", Arial, sans-serif; }
.combo { flex: none; position: relative; height: 21px; border: 1px solid #7f9db9; background: #fff; }
.combo select { width: 100%; height: 19px; padding: 0 14px 0 3px; border: 0; background: #fff; appearance: none; font: 11px/17px "Liberation Sans", Arial, sans-serif; color: #000; }
.combo svg { position: absolute; right: 1px; top: 1px; width: 15px; height: 17px; border-radius: 2px; background: linear-gradient(#d5e1fd, #b4c8f6); pointer-events: none; }
.palette { flex: none; display: grid; grid-template-columns: repeat(4, 22px); justify-content: center; gap: 7px 0; padding: 6px 0 6px 3px; }
.palette button { display: grid; place-items: center; height: 16px; }
.palette .three { font: bold 11px/16px "DejaVu Sans", sans-serif; color: #0000e0; }
.sample { flex: none; display: flex; flex-direction: column; height: 58px; margin: 1px 2px 0 4px; padding: 0 2px; border: 1px solid #1c4a80; border-radius: 3px; background: #f3f3ef; text-align: left; line-height: 15px; }
.sample svg { width: 100%; margin-top: 5px; overflow: visible; }
.desc { flex: none; height: 54px; padding-top: 2px; text-align: center; white-space: nowrap; line-height: 13px; }
.listbox { flex: 1; min-height: 0; display: flex; margin: 0 1px 0 3px; padding: 1px 0 0 1px; border: 1px solid #7f9db9; border-bottom: 0; background: #fff; }
.listbox ul { flex: 1; min-width: 0; padding-top: 1px; overflow: hidden; list-style: none; }
.listbox li { display: flex; align-items: center; height: 13px; white-space: nowrap; }
.listbox li span { flex: 1; line-height: 13px; overflow: hidden; }
.listbox li.used span { background: #0f0; }
.listbox li.sel span { background: #316ac5; color: #fff; }
.listbox li.last { border-top: 1px solid #906060; }
.list-scroll { flex: none; display: flex; flex-direction: column; align-items: center; width: 17px; background: #f8f7f2; }
.list-scroll .thumb { width: 14px; height: 7px; margin-top: 1px; }
.list-scroll .down { margin-top: auto; margin-bottom: -4px; }
</style>
